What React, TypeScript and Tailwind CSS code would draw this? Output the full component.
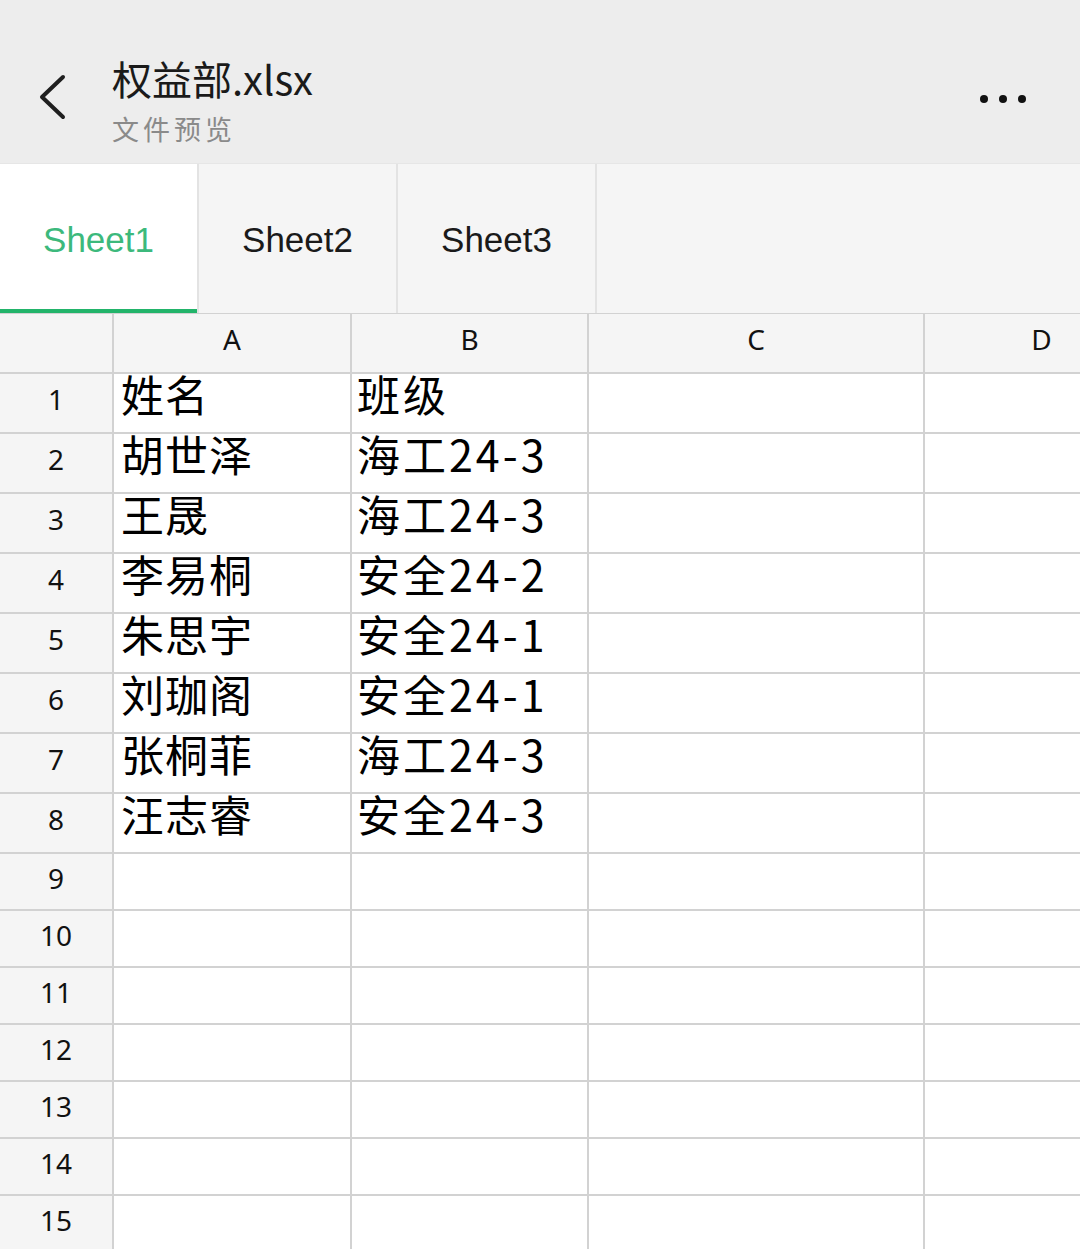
import React from 'react';

const CJK = '"Noto Sans CJK SC", "Noto Sans", sans-serif';

const ROWS: [string, string][] = [
  ['姓名', '班级'],
  ['胡世泽', '海工24-3'],
  ['王晟', '海工24-3'],
  ['李易桐', '安全24-2'],
  ['朱思宇', '安全24-1'],
  ['刘珈阁', '安全24-1'],
  ['张桐菲', '海工24-3'],
  ['汪志睿', '安全24-3'],
];

const EMPTY_ROWS = [9, 10, 11, 12, 13, 14, 15];

// ── Icons ───────────────────────────────────────────────────────────
function IconBack() {
  return (
    <svg width="30" height="46" viewBox="0 0 30 46" fill="none">
      <path d="M25 3L4 23l21 20" stroke="#1f1f1f" strokeWidth={4} strokeLinecap="round" strokeLinejoin="round" />
    </svg>
  );
}

function IconMore() {
  return (
    <div className="flex items-center gap-[11px]">
      <span className="w-[8px] h-[8px] rounded-full bg-[#111]" />
      <span className="w-[8px] h-[8px] rounded-full bg-[#111]" />
      <span className="w-[8px] h-[8px] rounded-full bg-[#111]" />
    </div>
  );
}

const TABS = ['Sheet1', 'Sheet2', 'Sheet3'];

export default function App() {
  return (
    <div className="w-[1080px] h-[1249px] overflow-hidden bg-white" style={{ fontFamily: CJK }}>
      {/* Header */}
      <div className="h-[163px] bg-[#ededed] flex items-start pt-[56px]">
        <div className="ml-[38px] mt-[18px] w-[74px]">
          <IconBack />
        </div>
        <div className="flex flex-col">
          <div className="text-[40px] leading-[44px] text-[#1a1a1a]">权益部.xlsx</div>
          <div className="mt-[11px] text-[27px] leading-[36px] text-[#8a8a8a] tracking-[4px]">文件预览</div>
        </div>
        <div className="ml-auto mr-[54px] mt-[39px]">
          <IconMore />
        </div>
      </div>

      {/* Sheet tabs */}
      <div className="h-[150px] flex bg-[#f5f5f5] border-t border-[#e6e6e6]">
        {TABS.map((t, i) => (
          <div key={t}
            className={`w-[199px] h-full flex items-center justify-center border-r-2 border-[#e3e3e3] relative ${i === 0 ? 'bg-white text-[#3cb97c]' : 'text-[#1a1a1a]'}`}>
            <span className="text-[35px] pt-[4px]" style={{ fontFamily: '"Liberation Sans", sans-serif' }}>{t}</span>
            {i === 0 && <div className="absolute left-0 right-0 bottom-0 h-[4px] bg-[#22b46a]" />}
          </div>
        ))}
      </div>

      {/* Grid */}
      <div className="grid grid-cols-[112px_236px_235px_334px_1fr] gap-[2px] bg-[#d2d2d2] pt-[1px]"
        style={{ fontFamily: '"Noto Sans", "Noto Sans CJK SC", sans-serif' }}>
        <div className="h-[58px] bg-[#f5f5f5]" />
        {['A', 'B', 'C'].map(c => (
          <div key={c} className="h-[58px] bg-[#f5f5f5] flex items-center justify-center text-[28px] text-[#111] pb-[8px]">{c}</div>
        ))}
        <div className="h-[58px] bg-[#f5f5f5] flex items-center justify-center text-[28px] text-[#111] pb-[8px] pl-[78px]">D</div>

        {ROWS.map(([name, cls], i) => (
          <React.Fragment key={i}>
            <div className="h-[58px] bg-[#f5f5f5] flex items-center justify-center text-[28px] text-[#111] pb-[9px]">{i + 1}</div>
            <div className="h-[58px] bg-white pl-[7px] text-[43px] leading-[38px] text-black tracking-[1px]" style={{ fontFamily: CJK }}>{name}</div>
            <div className="h-[58px] bg-white pl-[5px] text-[43px] leading-[38px] text-black tracking-[3px]" style={{ fontFamily: CJK }}>{cls}</div>
            <div className="h-[58px] bg-white" />
            <div className="h-[58px] bg-white" />
          </React.Fragment>
        ))}

        {EMPTY_ROWS.map(n => (
          <React.Fragment key={n}>
            <div className="h-[55px] bg-[#f5f5f5] flex items-center justify-center text-[28px] text-[#111] pb-[8px]">{n}</div>
            <div className="h-[55px] bg-white" />
            <div className="h-[55px] bg-white" />
            <div className="h-[55px] bg-white" />
            <div className="h-[55px] bg-white" />
          </React.Fragment>
        ))}
      </div>
    </div>
  );
}
